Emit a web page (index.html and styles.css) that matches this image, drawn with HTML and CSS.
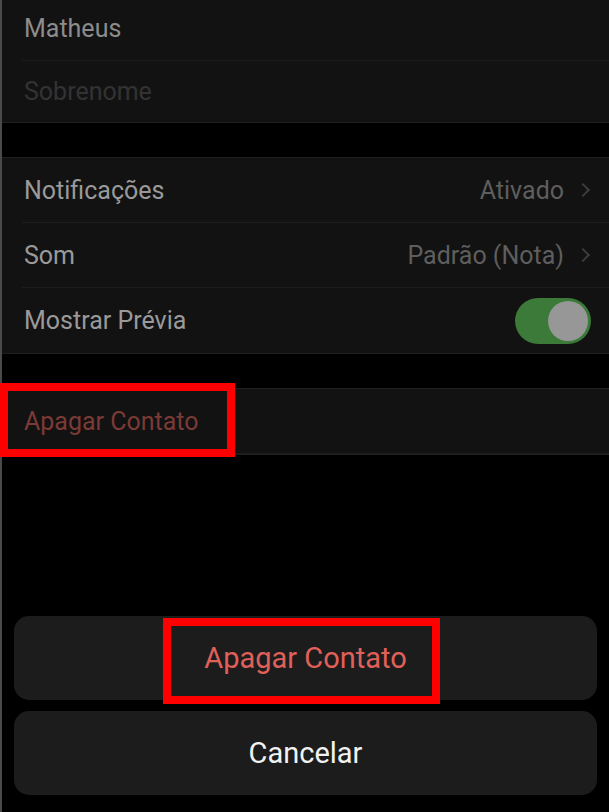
FILE: index.html
```html
<!DOCTYPE html>
<html lang="pt-BR">
<head>
  <meta charset="UTF-8"/>
  <meta name="viewport" content="width=device-width,initial-scale=1.0"/>
  <title>Contato</title>
  <link rel="stylesheet" href="styles.css">
</head>
<body>

  <div class="screen">
    <section class="group group-name">
      <div class="row"><span class="label name">Matheus</span></div>
      <div class="row"><span class="label placeholder">Sobrenome</span></div>
    </section>

    <section class="group">
      <div class="row">
        <span class="label">Notificações</span>
        <span class="value">Ativado <i class="chevron"></i></span>
      </div>
      <div class="row">
        <span class="label">Som</span>
        <span class="value">Padrão (Nota) <i class="chevron"></i></span>
      </div>
      <div class="row">
        <span class="label">Mostrar Prévia</span>
        <span class="toggle on"><span class="knob"></span></span>
      </div>
    </section>

    <section class="group group-delete">
      <div class="row"><span class="label danger">Apagar Contato</span></div>
      <div class="mark mark-list"></div>
    </section>

    <div class="sheet">
      <button class="sheet-btn destructive">
        Apagar Contato
        <span class="mark mark-sheet"></span>
      </button>
      <button class="sheet-btn cancel">Cancelar</button>
    </div>
  </div>

</body>
</html>
```

FILE: styles.css
```css
:root {
  --bg:        #000000;
  --cell:      #121212;
  --line:      #202020;
  --sheet:     #1c1c1c;
  --label:     #9a9a9a;
  --value:     #5e5e5e;
  --mark:      #ff0000;
}
*,*::before,*::after { box-sizing:border-box; margin:0; padding:0 }
body {
  background: var(--bg);
  font-family: Roboto, "Liberation Sans", sans-serif;
  width: 609px;
  height: 812px;
  overflow: hidden;
}
.screen {
  height: 812px;
  border-left: 2px solid #4a4a4a;
  display: flex;
  flex-direction: column;
}
.group {
  position: relative;
  background: var(--cell);
  border-top: 1px solid var(--line);
  border-bottom: 1px solid var(--line);
  margin-bottom: 34px;
}
.group-name { border-top:none; }
.row {
  height: 65px;
  margin-left: 20px;
  padding-left: 2px;
  padding-right: 18px;
  display: flex;
  align-items: center;
  justify-content: space-between;
  border-bottom: 1px solid #1d1d1d;
}
.row:last-child { border-bottom:none; }
.group-name .row { height: 61px; }
.group-name .row:first-child { padding-bottom: 4px; }
.label {
  font-size: 25px;
  color: var(--label);
}
.name { color:#8c8c8c; }
.placeholder { color:#333333; }
.danger { color:#7b3a36; }
.value {
  font-size: 25px;
  color: var(--value);
  display: flex;
  align-items: center;
  gap: 14px;
}
.chevron {
  width: 10px; height: 10px;
  border-right: 2px solid #3c3c3c;
  border-top: 2px solid #3c3c3c;
  transform: rotate(45deg);
  margin-right: 3px;
}
.toggle {
  width: 76px; height: 46px;
  border-radius: 23px;
  background: #3b7a38;
  display: flex;
  align-items: center;
  justify-content: flex-end;
  padding: 3px;
}
.knob {
  width: 40px; height: 40px;
  border-radius: 50%;
  background: #979797;
}
.group-delete .row { height: 65px; }
.mark {
  position: absolute;
  border: 8px solid var(--mark);
  pointer-events: none;
}
.mark-list {
  left: -2px; top: -6px;
  width: 235px; height: 74px;
}
.sheet {
  margin-top: auto;
  padding: 0 12px 17px 12px;
  display: flex;
  flex-direction: column;
  gap: 11px;
}
.sheet-btn {
  position: relative;
  height: 84px;
  border: none;
  border-radius: 15px;
  background: var(--sheet);
  font-family: inherit;
  font-size: 29px;
  color: #f2f2f2;
}
.destructive { color:#e0605a; }
.mark-sheet {
  left: 149px; top: 2px;
  width: 277px; height: 86px;
}
```
